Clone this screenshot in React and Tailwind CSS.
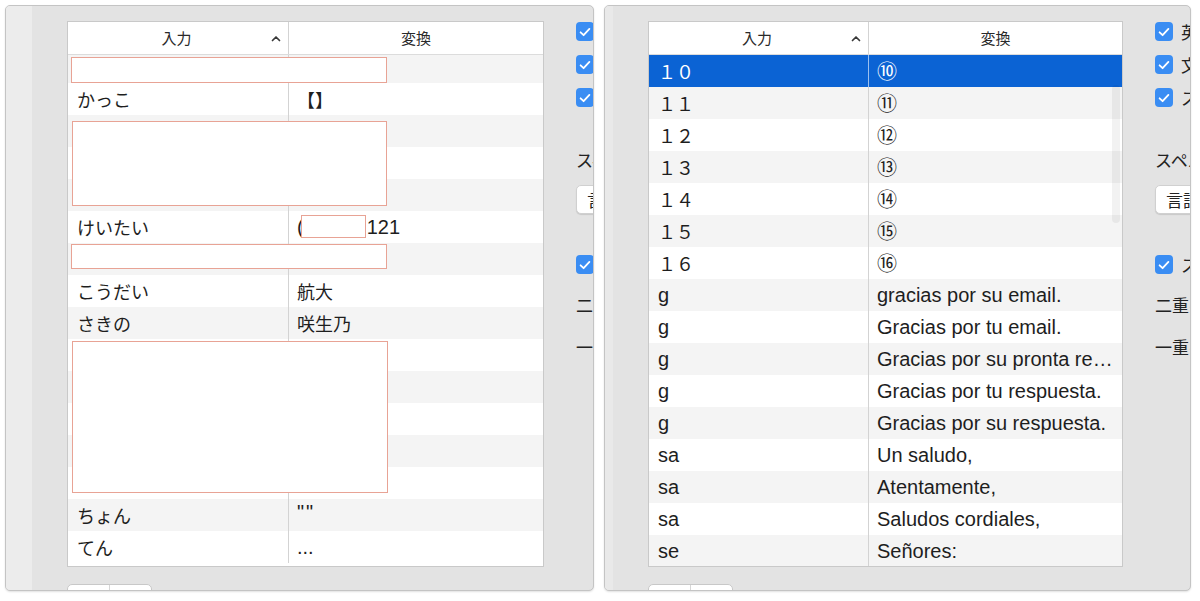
import React from "react";

const SANS = "font-['Liberation_Sans','Noto_Sans_CJK_JP',sans-serif]";
const JP = "font-['Noto_Sans_CJK_JP',sans-serif]";

function Check() {
  return (
    <div className="w-[18px] h-[19px] rounded-[4px] bg-[#3a8df3] flex items-center justify-center shrink-0">
      <svg width="12" height="10" viewBox="0 0 12 10">
        <path d="M1.6 5.3 L4.6 8.2 L10.4 1.9" stroke="white" strokeWidth="1.8" fill="none" strokeLinecap="round" strokeLinejoin="round" />
      </svg>
    </div>
  );
}

function Caret() {
  return (
    <svg width="10" height="7" viewBox="0 0 10 7" className="shrink-0">
      <path d="M1.5 5.5 L5 2 L8.5 5.5" stroke="#3a3a3a" strokeWidth="1.7" fill="none" strokeLinecap="round" strokeLinejoin="round" />
    </svg>
  );
}

function Side({ labels }) {
  return (
    <div className={`flex flex-col pt-[16px] shrink-0 text-[17px] text-[#222] ${JP}`}>
      {labels.slice(0, 3).map((l, i) => (
        <div key={i} className="h-[33px] flex items-start gap-[8px] whitespace-nowrap">
          <Check />
          <span className="leading-[19px]">{l}</span>
        </div>
      ))}
      <div className="mt-[27px] h-[24px] leading-[24px] whitespace-nowrap">スペル：</div>
      <div className="mt-[13px] h-[29px] w-[190px] rounded-[5px] bg-white border border-[#d0d0d0] shadow-[0_1px_1px_rgba(0,0,0,0.12)] pl-[10px] flex items-center text-[17px] leading-[20px] whitespace-nowrap">
        言語によって自動
      </div>
      <div className="mt-[41px] h-[19px] flex items-start gap-[8px] whitespace-nowrap">
        <Check />
        <span className="leading-[19px]">{labels[3]}</span>
      </div>
      <div className="mt-[19px] h-[24px] leading-[24px] whitespace-nowrap">二重引用符：</div>
      <div className="mt-[18px] h-[24px] leading-[24px] whitespace-nowrap">一重引用符：</div>
    </div>
  );
}

function Row({ a, b, stripe, selected, col1, jpA, jpB, bigB, children }) {
  const bg = selected ? "bg-[#0b63d4] text-white" : stripe ? "bg-[#f4f4f4] text-[#1e1e1e]" : "bg-white text-[#1e1e1e]";
  const div = selected ? "border-[#9cc0ef]" : "border-[#d3d3d3]";
  const bFont = bigB ? `${JP} text-[20px] leading-[24px]` : jpB ? `${JP} text-[18px] leading-[24px]` : `${SANS} text-[20px] leading-[24px]`;
  return (
    <div className={`flex h-[32px] shrink-0 ${bg}`}>
      <div className={`${col1} shrink-0 border-r ${div} pl-[9px] flex items-center whitespace-nowrap overflow-hidden ${jpA ? `${JP} text-[18px] leading-[24px]` : `${SANS} text-[20px] leading-[24px]`}`}>
        {a}
      </div>
      <div className={`flex-1 min-w-0 pl-[8px] flex items-center whitespace-nowrap overflow-hidden ${bFont}`}>
        {children || b}
      </div>
    </div>
  );
}

function Table({ width, col1, rows, offset, overlays }) {
  return (
    <div className={`${width} border border-[#c9c9c9] bg-white flex flex-col`}>
      <div className={`flex h-[33px] bg-white border-b border-[#dcdcdc] text-[15px] text-[#2a2a2a] ${JP}`}>
        <div className={`${col1} shrink-0 border-r border-[#d3d3d3] flex items-center`}>
          <div className="flex-1 text-center pl-[14px]">入力</div>
          <div className="mr-[7px]"><Caret /></div>
        </div>
        <div className="flex-1 flex items-center justify-center">変換</div>
      </div>
      <div className="relative h-[511px] overflow-hidden">
        <div className={`flex flex-col ${offset}`}>
          {rows.map((r, i) => (
            <Row key={i} a={r.a} b={r.b} stripe={r.stripe} selected={r.sel} col1={col1} jpA={r.jpA} jpB={r.jpB} bigB={r.bigB}>
              {r.node}
            </Row>
          ))}
        </div>
        {overlays}
      </div>
    </div>
  );
}

function Buttons() {
  return (
    <div className="mt-[17px] flex w-[85px] h-[20px] bg-white border border-[#c8c8c8] rounded-[5px]">
      <div className="w-[42px] border-r border-[#d6d6d6]" />
      <div className="flex-1" />
    </div>
  );
}

const leftRows = [
  { a: "", b: "", stripe: true },
  { a: "かっこ", b: "【】", jpA: true, jpB: true },
  { a: "", b: "", stripe: true },
  { a: "", b: "" },
  { a: "", b: "", stripe: true },
  {
    a: "けいたい",
    jpA: true,
    node: (
      <>
        <span>(</span>
        <span className="inline-block w-[63px]" />
        <span>121</span>
      </>
    ),
  },
  { a: "", b: "", stripe: true },
  { a: "こうだい", b: "航大", jpA: true, jpB: true },
  { a: "さきの", b: "咲生乃", jpA: true, jpB: true, stripe: true },
  { a: "", b: "" },
  { a: "", b: "", stripe: true },
  { a: "", b: "" },
  { a: "", b: "", stripe: true },
  { a: "", b: "" },
  { a: "ちょん", jpA: true, stripe: true, node: <span className="tracking-[2px] -mt-[6px]">""</span> },
  { a: "てん", b: "...", jpA: true },
];

const rightData = [
  ["１０", "⑩", true],
  ["１１", "⑪", true],
  ["１２", "⑫", true],
  ["１３", "⑬", true],
  ["１４", "⑭", true],
  ["１５", "⑮", true],
  ["１６", "⑯", true],
  ["g", "gracias por su email."],
  ["g", "Gracias por tu email."],
  ["g", "Gracias por su pronta re…"],
  ["g", "Gracias por tu respuesta."],
  ["g", "Gracias por su respuesta."],
  ["sa", "Un saludo,"],
  ["sa", "Atentamente,"],
  ["sa", "Saludos cordiales,"],
  ["se", "Señores:"],
];
const rightRows = rightData.map((d, i) => ({
  a: d[0],
  b: d[1],
  jpA: !!d[2],
  bigB: !!d[2],
  sel: i === 0,
  stripe: i % 2 === 1,
}));

const redBox = "absolute bg-white border border-[#e8a395]";

export default function App() {
  return (
    <div className="w-[1200px] h-[601px] bg-white flex gap-[10px] pt-[5px] pl-[5px] overflow-hidden">
      {/* Left panel */}
      <div className="w-[589px] h-[586px] shrink-0 border border-[#c4c4c4] rounded-[5px] bg-[#e3e3e3] overflow-hidden flex shadow-[0_1px_2px_rgba(0,0,0,0.12)]">
        <div className="w-[26px] shrink-0 bg-[#ececec]" />
        <div className="ml-[35px] pt-[15px] shrink-0">
          <Table
            width="w-[477px]"
            col1="w-[221px]"
            rows={leftRows}
            offset="-mt-[4px]"
            overlays={
              <>
                <div className={`${redBox} left-[3px] top-[2px] w-[316px] h-[26px]`} />
                <div className={`${redBox} left-[4px] top-[66px] w-[315px] h-[85px]`} />
                <div className={`${redBox} left-[233px] top-[160px] w-[65px] h-[23px]`} />
                <div className={`${redBox} left-[3px] top-[189px] w-[316px] h-[25px]`} />
                <div className={`${redBox} left-[4px] top-[286px] w-[316px] h-[152px]`} />
              </>
            }
          />
          <Buttons />
        </div>
        <div className="ml-[32px]">
          <Side labels={["スペルを自動変換", "文頭を自動的に大文字にする", "スペースバーを2回押してピリオドを入力", "スマート引用符とスマートダッシュを使用"]} />
        </div>
      </div>

      {/* Right panel */}
      <div className="w-[587px] h-[586px] shrink-0 border border-[#c4c4c4] rounded-[5px] bg-[#e3e3e3] overflow-hidden flex shadow-[0_1px_2px_rgba(0,0,0,0.12)]">
        <div className="w-[8px] shrink-0 bg-[#e9e9e9]" />
        <div className="ml-[35px] pt-[15px] shrink-0">
          <Table
            width="w-[475px]"
            col1="w-[220px]"
            rows={rightRows}
            offset=""
            overlays={
              <div className="absolute left-[463px] top-[30px] w-[8px] h-[138px] rounded-[4px] bg-black/[0.05]" />
            }
          />
          <Buttons />
        </div>
        <div className="ml-[32px]">
          <Side labels={["英字のスペルを自動変換", "文頭を自動的に大文字にする", "スペースバーを2回押してピリオドを入力", "スマート引用符とスマートダッシュを使用"]} />
        </div>
      </div>
    </div>
  );
}
